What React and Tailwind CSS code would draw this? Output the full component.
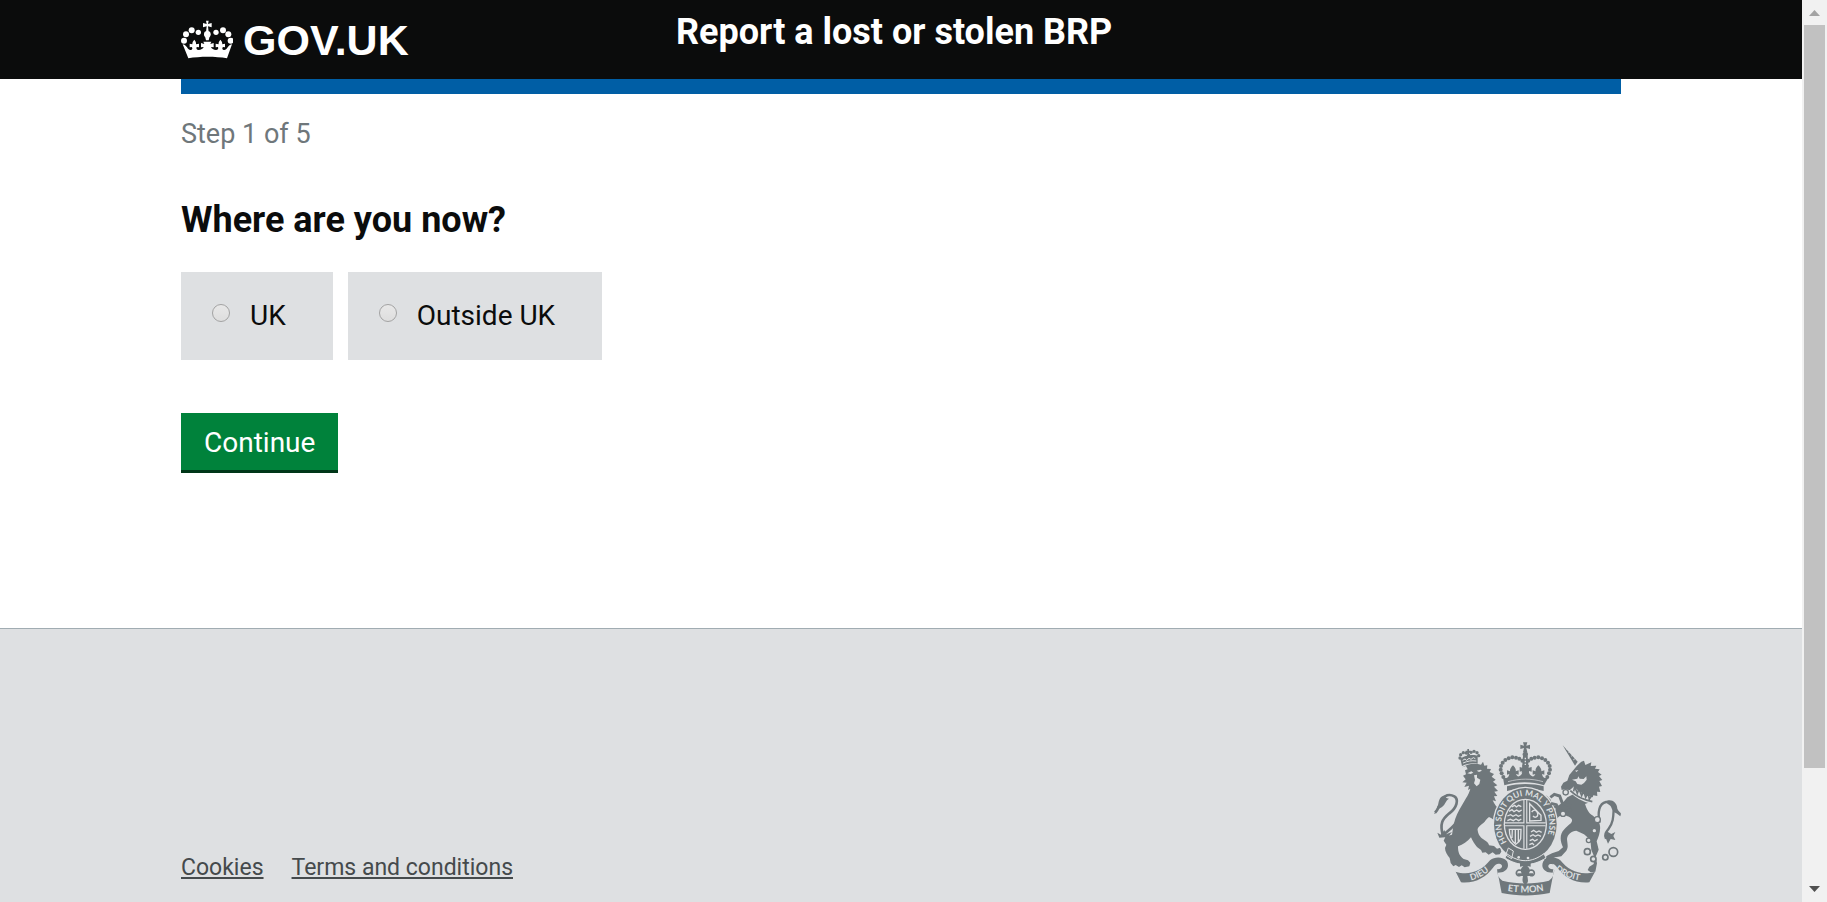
import React from "react";

const dots = (list, r) =>
  list.map(([x, y]) => <circle key={x + "-" + y} cx={x} cy={y} r={r} />);

function Crown() {
  return (
    <svg viewBox="15 25 156 117" className="h-[39px] w-[52px] shrink-0" fill="#fff" aria-hidden="true">
      {dots([[24, 87], [30, 68], [47, 56], [141, 56], [157, 68], [164, 87]], 9)}
      {dots([[67, 62], [120, 62]], 8)}
      <circle cx="94" cy="68" r="10" />
      <path d="M90 27h8l-2 10 11-3v13l-11-3 2 18h-8l2-18-11 3V34l11 3z" />
      <path d="M85 66h18l-5 20h-8z" />
      <path d="M20 98c4 0 9 3 13 9 4 6 7 9 12 8 5-1 5-6 2-9l-6 1V96l8 2c0-5 1-9 6-14 4 5 6 9 5 14l9-2v11l-7-1c-2 5 0 9 6 9 7 0 13-4 15-9l-8 1V94l10 3-3-7h24l-3 7 10-3v13l-8-1c2 5 8 9 15 9 6 0 8-4 6-9l-7 1V96l9 2c-1-5 1-9 5-14 5 5 6 9 6 14l8-2v11l-6-1c-3 3-3 8 2 9 5 1 8-2 12-8 4-6 9-9 13-9l-15 42c-35-6-81-6-116 0z" />
    </svg>
  );
}

function RoyalArms() {
  const ink = "#6f777b";
  const paper = "#dee0e2";
  return (
    <svg viewBox="27 20 561 462" className="h-auto w-[187px] shrink-0" fill={ink} role="img" aria-label="Royal coat of arms">
      <defs>
        <path id="garter" d="M248 324A72 85 0 1 1 354 324" />
        <path id="ribbonLeft" d="M132 436Q176 428 210 389" />
        <path id="ribbonMid" d="M236 465Q302 478 368 464" />
        <path id="ribbonRight" d="M380 393Q415 432 486 438" />
      </defs>

      {/* lion */}
      <path d="M111 92l-5-22c12-10 42-15 52-8l0 23c-15-3-31-1-47 7z" />
      {dots([[105, 68], [107, 58], [115, 52], [124, 53], [138, 51], [147, 48], [156, 52], [161, 61], [131, 60]], 5)}
      <path d="M127 41h5v5h5v5h-5v6h-5v-6h-5v-5h5z" />
      <path d="M113 75l7-4 5 4 7-6 6 3 7-5 6 3M114 83c14-6 26-8 40-6" fill="none" stroke={paper} strokeWidth="3" />
      <path d="M112 96c12-9 36-15 56-8l6-9 4 12 9-1-1 10 12 1-4 9 13 6-7 8 12 9-8 6 13 11-10 4 12 13-11 2 9 13-10 1 6 15-10-3c5 12 12 22 25 30l14 7-4 12 12 10-9 2 3 14-12-6-2 15-10-12c-8-10-18-18-28-22-8 6-11 13-17 18-11 9-19 14-17 22 2 15 9 22 20 29 8 5 14 10 14 16l15 2 9 8 10-3 3 12-5 8-12 1-9-7-12 7-9-7-10 1-4-8-12-9c-7-8-13-18-18-29-11 13-24 22-39 27 0 17 3 28 17 38l13 4 7 7-3 11-14 3-9-6-8 5-10-6-7 4-8-10-3-15c-7-9-14-19-14-30l4-10-8-12 6-13 19-5 3-20c3-18 9-38 19-55l20-34c6-10 11-20 13-29l-7 4 3-13-14 4 7-13-13-1 10-9-8-11 9-4-3-12 8-3-5-10z" />
      <path d="M127 114l12-6 6 4-8 4zM155 106l11-3 5 3-9 4zM147 120l9-2 0 9 10 6-3 13-8 7-8-9 3-10z" fill={paper} />
      <path d="M97 258c-14 20-36 36-47 44M53 298c-8-32-3-45 20-64 23-17 29-42 15-51-16-9-29-2-36 10-11 16-10 28-22 39" fill="none" stroke={ink} strokeWidth="8" />
      <path d="M27 234c9-4 6-15 13-26 1-17 9-29 23-27-3 6 0 7 9 9-10 5-10 15-17 21-6 8-15 7-19 16-3 8-9 9-9 7zM37 292l11 6 10-14 5 13 18-7-12 15-26 2z" />

      {/* unicorn */}
      <path d="M413 30l45 49-8 12z" />
      <path d="M423 42l7-4M430 52l8-5M438 63l9-5M444 74l10-6" stroke={paper} strokeWidth="2" />
      <path d="M456 91l13-12 8-3 4 13 18-8-2 11 17-1-4 9 14 2-5 8 11 8-8 4 10 12-9 3 8 15-9 2 4 16-10-1 1 13-12-2-7 19-18 7c6 17 11 28 24 35 11 10 20 18 21 31 2 16-4 31-10 46l6 25-9 21 4 20-5 25-14 2-9-7 5-10 13-8 2-21-9-21-3-31-19-16-23-11c-14 1-27 11-28 25 1 15 5 24-2 35l-15 17-18 3-19 7 13 14-24-3-4-13 9-10 15-7 20-7 13-11c-9-20-11-38 4-54 13-15 27-19 22-31-5-8-14-7-19-12l-18 4-13 12-2 17-11-3-1-12-10-2 8-12-3-9 13-2 9-12-14-5-4-16-9-7-15 3-7 8-9-9 12-12 18-1 12 12 4 16 16 4 19-14 11-13 18-9 6-10-17-2-13-4-11 3-2-10 7-12 12-6 6-17z" />
      <path d="M450 106l10-2-5 6zM441 133l16-3 3-7 4 7 12 1 8-8 1 10-8 10-8 5-12-2-5-8z" fill={paper} />
      <path d="M439 160c17 19 38 31 67 37" fill="none" stroke={paper} strokeWidth="20" />
      <path d="M436 166c17 17 38 27 66 33M446 168l3-14 8 20 5-13 8 20 6-14 6 19 7-13 4 18 7-10" fill="none" stroke={ink} strokeWidth="5" />
      <path d="M524 262c-7-30-2-58 19-62 14-2 24 6 23 22-1 22-1 40-15 58-8 10-14 18-8 30" fill="none" stroke={ink} strokeWidth="7" />
      <path d="M540 200c14-12 36-3 37 20 3 8 10 10 11 15l-2 8-12-9c-15-6-12-18-20-24zM545 288l14 8 12-6-6 12 6 12-14-3-8 14-8-20z" />

      {/* crown */}
      <path d="M294 21h13l-3 10 11-3v13l-11-3 3 13h-13l3-13-11 3V28l11 3z" />
      <circle cx="301" cy="57" r="8" />
      <path d="M294 62h14l4 50h-22z" />
      <path d="M301 67v40" stroke={paper} strokeWidth="4" strokeDasharray="5 4" />
      {dots([[292, 76], [283, 70], [273, 67], [262, 66], [251, 69], [241, 74], [233, 82], [228, 92], [227, 103], [230, 114], [235, 125], [310, 76], [319, 70], [329, 67], [340, 66], [351, 69], [361, 74], [369, 82], [374, 92], [375, 103], [372, 114], [367, 125]], 6)}
      <path d="M234 127c15 4 17-3 19-11l-7 2v-13l9 3c-1-6 3-12 9-18 6 6 10 12 8 18l9-3v13l-8-2c3 9 9 9 14 4 4-4 6-8 5-13l-8 2V95l11 3-3-9h20l-3 9 11-3v14l-8-2c-1 5 1 9 5 13 5 5 11 5 14-4l-8 2v-13l9 3c-2-6 2-12 8-18 6 6 10 12 9 18l9-3v13l-7-2c2 8 4 15 19 11l-13 23c-36-12-80-12-119 0z" />
      <path d="M249 139c35-10 70-10 105 0" fill="none" stroke={paper} strokeWidth="2" />
      <path d="M246 153c34-9 77-9 110 0v14c-34-10-76-10-110 0z" />

      {/* garter */}
      <ellipse cx="301" cy="267" rx="98" ry="113" fill={paper} />
      <ellipse cx="301" cy="267" rx="94" ry="109" />
      <ellipse cx="301" cy="267" rx="65" ry="77" fill={paper} />
      <ellipse cx="301" cy="267" rx="61" ry="73" />
      <path d="M301 194v146M240 267h122" stroke={paper} strokeWidth="12" />
      <path d="M301 194v146M240 267h122" stroke={ink} strokeWidth="5" />
      <g fill="none" stroke={paper} strokeWidth="4">
        <path d="M252 228l9-5 6 6 8-5 7 5 8-5M247 242l10-4 7 5 9-5 7 5 9-4M247 256l9-4 9 4 8-5 8 5 8-5M260 215l9-5 5 5 7-5 8 4M318 290l8-5 8 6 8-4 8 4M315 303l9-5 7 5 8-4 9 4M314 316l9-4 6 5 9-5M313 328l9-4 5 5" />
        <path d="M314 205l34 35v15l-34 2zM320 230c8-10 16-5 18 5s-8 14-14 7M253 282h35l-1 28c-2 9-9 13-15 17-12-9-19-24-19-45zM262 283l-1 25M271 283v40M280 283v36" />
      </g>
      <path d="M245 355c38 28 74 28 112 0l6 13c-41 26-82 26-123 0z" stroke={paper} strokeWidth="3" />
      <circle cx="281" cy="366" r="4" fill={paper} />
      <circle cx="309" cy="368" r="4" fill={paper} />
      <path d="M250 338l15 9-5 23-18-11z" fill="none" stroke={paper} strokeWidth="3" />

      {/* unicorn forelegs and chain */}
      <path d="M438 212l-26-8-8-22-16-5-12 9M440 222l-22 8-16-4-8-18-16-4" fill="none" stroke={ink} strokeWidth="9" />
      <g fill={paper} stroke={ink} strokeWidth="4">
        <circle cx="422" cy="171" r="8" /><circle cx="414" cy="235" r="8" /><circle cx="517" cy="253" r="9" />
        <circle cx="508" cy="286" r="7" /><circle cx="491" cy="315" r="7" />
      </g>
      <g fill={paper} stroke={ink} strokeWidth="5">
        <circle cx="487" cy="349" r="9" /><circle cx="505" cy="371" r="8" />
        <circle cx="541" cy="366" r="8" /><circle cx="565" cy="350" r="13" />
      </g>

      {/* motto scroll */}
      <path d="M92 409c39 14 78-2 103-34 15-12 39-11 51 3 8 16-1 29-16 33l-12 1-2-10c15 1 20-11 10-16-9-3-15 1-22 11-21 28-53 48-96 44zM510 409c-40 14-79-2-104-34-15-12-39-11-51 3-8 16 1 29 16 33l12 1 2-10c-15 1-20-11-10-16 9-3 15 1 22 11 21 28 53 48 96 44z" />
      <path d="M216 402c4 20 7 34 14 71 45 10 99 10 144 0 7-37 10-51 14-71-1 20-8 28-16 34-46 11-94 11-140 0-8-6-15-14-16-34z" />
      <path d="M285 382h32v12l-10-2c9 8 8 15 5 22h12v8h-17c2 12 5 19-6 26-11-7-9-14-7-26h-17v-8h13c-4-7-4-14 5-22l-10 2z" />
      <path d="M286 421c-15 3-15-14-4-17 9 0 13 7 14 13M316 421c15 3 15-14 4-17-9 0-13 7-14 13" fill="none" stroke={ink} strokeWidth="5" />
      <g fill={paper} fontFamily="Lato, sans-serif" fontWeight="bold">
        <text fontSize="25"><textPath href="#garter" startOffset="4">HON SOIT QUI MAL Y PENSE</textPath></text>
        <text fontSize="26"><textPath href="#ribbonLeft" startOffset="6">DIEU</textPath></text>
        <text fontSize="28"><textPath href="#ribbonMid" startOffset="12">ET MON</textPath></text>
        <text fontSize="26"><textPath href="#ribbonRight" startOffset="14">DROIT</textPath></text>
      </g>
    </svg>
  );
}

function Choice({ id, label }) {
  return (
    <label htmlFor={id} className="flex h-[88px] cursor-pointer items-center bg-[#dee0e2] pr-[47px] pl-[31px] text-[28px] leading-8">
      <input
        id={id}
        type="radio"
        name="location"
        className="mr-5 mb-[6px] size-[18px] appearance-none rounded-full border border-[#a3a3a3] bg-linear-to-b from-[#e8e8e8] to-[#dedede] checked:border-[5px] checked:border-[#0b0c0c]"
      />
      {label}
    </label>
  );
}

function Scrollbar() {
  return (
    <div className="flex w-[25px] shrink-0 flex-col items-center bg-[#f1f1f1]" aria-hidden="true">
      <svg viewBox="0 0 25 25" className="size-[25px] shrink-0" fill="#a3a3a3"><path d="M7 16l5.500-6 5.500 6z" /></svg>
      <div className="w-[21px] basis-[743px] bg-[#c1c1c1]" />
      <div className="flex-1" />
      <svg viewBox="0 0 25 25" className="size-[25px] shrink-0" fill="#505050"><path d="M7 9l5.500 6 5.500-6z" /></svg>
    </div>
  );
}

export default function App() {
  return (
    <div className="flex h-screen overflow-hidden bg-white font-[Roboto,sans-serif] text-[#0b0c0c]">
      <div className="flex min-w-0 flex-1 flex-col overflow-hidden">
        <header className="bg-[#0b0c0c] text-white">
          <div className="mx-auto grid h-[79px] max-w-[1440px] grid-cols-3">
            <a href="#home" className="flex items-center gap-[10px] font-['Liberation_Sans',sans-serif] text-[43px] leading-none font-bold">
              <Crown />
              <span className="pt-[2px]">GOV.UK</span>
            </a>
            <a href="#start" className="col-span-2 pt-3 pl-[15px] text-[36px] leading-10 font-bold">
              Report a lost or stolen BRP
            </a>
          </div>
        </header>
        <main className="mx-auto w-full max-w-[1440px] shrink-0 pb-[155px]">
          <div className="h-[15px] bg-[#005ea5]" />
          <p className="pt-6 text-[27px] leading-8 text-[#6f777b]">Step 1 of 5</p>
          <form onSubmit={(e) => e.preventDefault()}>
            <fieldset>
              <legend className="pt-[50px] text-[36px] leading-10 font-bold">Where are you now?</legend>
              <div className="flex gap-[15px] pt-8">
                <Choice id="uk" label="UK" />
                <Choice id="outside-uk" label="Outside UK" />
              </div>
            </fieldset>
            <button type="submit" className="mt-[53px] h-[60px] border-b-[3px] border-[#003618] bg-[#00823b] px-[23px] pt-[3px] text-[28px] leading-8 text-white">
              Continue
            </button>
          </form>
        </main>
        <footer className="flex-1 border-t border-[#a1acb2] bg-[#dee0e2] pt-[113px]">
          <div className="mx-auto flex max-w-[1440px] items-end justify-between">
            <nav className="flex gap-7 pb-[14px] text-[23px] leading-7 text-[#454a4c]">
              <a href="#cookies" className="underline decoration-2 underline-offset-2">Cookies</a>
              <a href="#terms" className="underline decoration-2 underline-offset-2">Terms and conditions</a>
            </nav>
            <RoyalArms />
          </div>
        </footer>
      </div>
      <Scrollbar />
    </div>
  );
}
